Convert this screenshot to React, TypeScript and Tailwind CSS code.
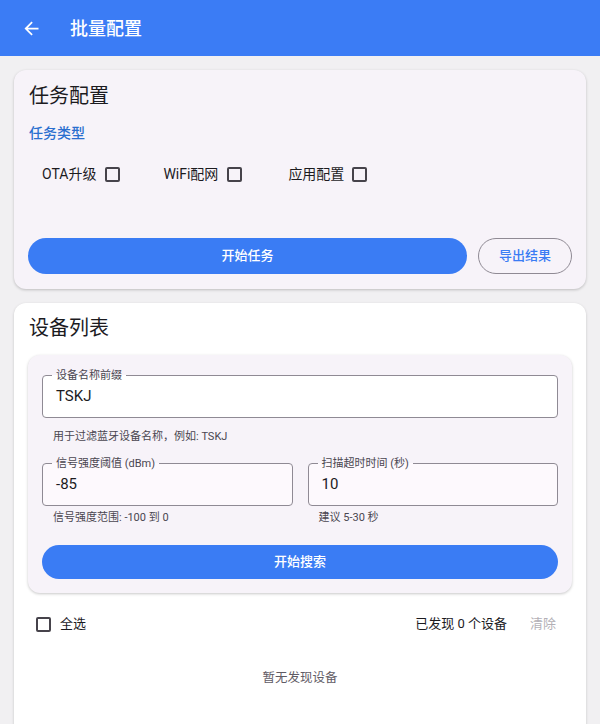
import React from "react";

const font = { fontFamily: '"Roboto", "Noto Sans CJK SC", sans-serif' };

function Box() {
  return <span className="inline-block w-[15px] h-[15px] border-2 border-[#46434b] rounded-[2px]" />;
}

function Field({ label, value, bg }: { label: string; value: string; bg: string }) {
  return (
    <div className={`relative h-[43px] border border-[#8f8a94] rounded-[4px] ${bg} flex items-center pl-[13px]`}>
      <span
        className={`absolute left-[9px] top-[-8px] px-[4px] text-[11px] leading-[15px] text-[#4a4650] ${
          bg === "bg-white"
            ? "bg-[linear-gradient(to_bottom,#f7f3f9_50%,#ffffff_50%)]"
            : "bg-[linear-gradient(to_bottom,#f7f3f9_50%,#fdf9fd_50%)]"
        }`}
      >
        {label}
      </span>
      <span className="text-[15px] text-[#1c1b1f]">{value}</span>
    </div>
  );
}

export default function App() {
  return (
    <div style={font} className="w-[600px] h-[724px] overflow-hidden bg-[#f1f0f2] flex flex-col">
      <div className="h-14 bg-[#3b7cf5] flex items-center shrink-0">
        <svg className="ml-[21px]" width="21" height="21" viewBox="0 0 24 24" fill="white">
          <path d="M20 11H7.83l5.59-5.59L12 4l-8 8 8 8 1.41-1.41L7.83 13H20v-2z" />
        </svg>
        <span className="ml-[28px] text-[18px] font-medium text-white">批量配置</span>
      </div>

      <div className="px-[14px] pt-[14px] flex flex-col gap-[14px]">
        <div className="bg-[#f7f3f9] rounded-[12px] shadow-[0_1px_3px_rgba(0,0,0,0.22)] px-[14px] pt-[12px] pb-[15px]">
          <div className="px-[1px] text-[20px] leading-[28px] text-[#1c1b1f]">任务配置</div>
          <div className="mt-[13px] px-[1px] text-[14px] leading-[20px] font-medium text-[#2a6fcf]">任务类型</div>
          <div className="mt-[19px] h-[24px] flex items-center pl-[14px] text-[14px] text-[#1c1b1f]">
            <span>OTA升级</span>
            <span className="ml-[9px] flex"><Box /></span>
            <span className="ml-[43px]">WiFi配网</span>
            <span className="ml-[9px] flex"><Box /></span>
            <span className="ml-[46px]">应用配置</span>
            <span className="ml-[8px] flex"><Box /></span>
          </div>
          <div className="mt-[52px] flex gap-[11px]">
            <div className="flex-1 h-[36px] rounded-full bg-[#3a7cf4] flex items-center justify-center text-white text-[13px] font-medium">
              开始任务
            </div>
            <div className="w-[94px] h-[36px] rounded-full border border-[#8f8a94] flex items-center justify-center text-[#3a7cf4] text-[13px] font-medium">
              导出结果
            </div>
          </div>
        </div>

        <div className="bg-white rounded-[12px] shadow-[0_1px_3px_rgba(0,0,0,0.18)] px-[14px] pt-[11px] h-[440px]">
          <div className="px-[1px] text-[20px] leading-[28px] text-[#1c1b1f]">设备列表</div>
          <div className="mt-[13px] bg-[#f7f3f9] rounded-[12px] shadow-[0_1px_3px_rgba(0,0,0,0.22)] px-[14px] pt-[20px] pb-[14px]">
            <Field label="设备名称前缀" value="TSKJ" bg="bg-white" />
            <div className="mt-[11px] pl-[11px] text-[11px] leading-[16px] text-[#4a4650]">
              用于过滤蓝牙设备名称，例如: TSKJ
            </div>
            <div className="mt-[18px] grid grid-cols-2 gap-[15px]">
              <div>
                <Field label="信号强度阈值 (dBm)" value="-85" bg="bg-[#fdf9fd]" />
                <div className="mt-[4px] pl-[11px] text-[11px] leading-[16px] text-[#4a4650]">信号强度范围: -100 到 0</div>
              </div>
              <div>
                <Field label="扫描超时时间 (秒)" value="10" bg="bg-[#fdf9fd]" />
                <div className="mt-[4px] pl-[11px] text-[11px] leading-[16px] text-[#4a4650]">建议 5-30 秒</div>
              </div>
            </div>
            <div className="mt-[19px] h-[34px] rounded-full bg-[#3a7cf4] flex items-center justify-center text-white text-[13px] font-medium">
              开始搜索
            </div>
          </div>
          <div className="mt-[19px] h-[24px] flex items-center pl-[8px] pr-[16px]">
            <Box />
            <span className="ml-[9px] text-[13px] text-[#1c1b1f]">全选</span>
            <span className="ml-auto text-[13px] text-[#1c1b1f]">已发现 0 个设备</span>
            <span className="ml-[23px] text-[13px] text-[#b3b0b6]">清除</span>
          </div>
          <div className="mt-[33px] text-center text-[12.5px] text-[#5f5b64]">暂无发现设备</div>
        </div>
      </div>
    </div>
  );
}
